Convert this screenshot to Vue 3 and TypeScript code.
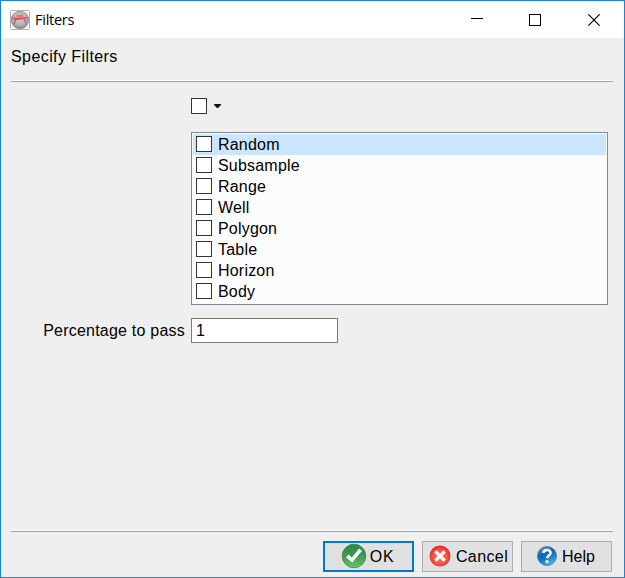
<script setup lang="ts">
import { ref } from 'vue'

interface FilterItem {
  name: string
  checked: boolean
}

const filters = ref<FilterItem[]>(
  ['Random', 'Subsample', 'Range', 'Well', 'Polygon', 'Table', 'Horizon', 'Body'].map((name) => ({
    name,
    checked: false,
  })),
)
const selected = ref(0)
const allChecked = ref(false)
const percentage = ref('1')

function toggleAll(): void {
  filters.value.forEach((f) => (f.checked = allChecked.value))
}
</script>

<template>
  <div class="window">
    <header class="titlebar">
      <svg class="app-icon" width="20" height="20" viewBox="0 0 20 20">
        <defs>
          <radialGradient id="disc" cx=".5" cy=".4" r=".6">
            <stop offset="0" stop-color="#d2d2d2" />
            <stop offset=".65" stop-color="#b5b5b5" />
            <stop offset="1" stop-color="#858585" />
          </radialGradient>
        </defs>
        <rect x=".5" y=".5" width="19" height="19" rx="1" fill="#f4f4f4" stroke="#b0b0b0" />
        <circle cx="10" cy="10" r="8.7" fill="url(#disc)" stroke="#888" stroke-width=".8" />
        <path d="M6 5.5 12.8 4.2 13.5 7 6.5 7.5z" fill="#e8494b" fill-opacity=".6" />
        <path d="M2.2 7.4 6 8.6 17.8 7.6M4 9.6 13.5 8.8M5.6 9.5 4.3 13.8M14.5 8.5 15.6 13.5" fill="none" stroke="#ea4648" stroke-width="1.1" />
      </svg>
      <span class="title">Filters</span>
      <div class="controls">
        <svg width="12" height="12" viewBox="0 0 12 12"><path d="M0 4.5h12" stroke="#000" /></svg>
        <svg width="12" height="12" viewBox="0 0 12 12"><rect x=".5" y=".5" width="11" height="11" fill="none" stroke="#000" /></svg>
        <svg width="12" height="12" viewBox="0 0 12 12"><path d="M.3.3l11.4 11.4M11.7.3.3 11.7" stroke="#000" stroke-width="1.1" /></svg>
      </div>
    </header>

    <main class="content">
      <h1 class="heading">Specify Filters</h1>
      <div class="rule"></div>
      <div class="select-all">
        <input v-model="allChecked" type="checkbox" class="box" @change="toggleAll" />
        <svg width="7" height="4" viewBox="0 0 7 4"><path d="M0 0h7v1L4 4H3L0 1z" fill="#111" /></svg>
      </div>
      <ul class="list">
        <li
          v-for="(f, i) in filters"
          :key="f.name"
          :class="['row', { active: i === selected }]"
          @click="selected = i"
        >
          <input v-model="f.checked" type="checkbox" class="box" />
          <span>{{ f.name }}</span>
        </li>
      </ul>
      <label class="field">
        <span class="field-label">Percentage to pass</span>
        <input v-model="percentage" class="text" type="text" />
      </label>
    </main>

    <footer class="footer">
      <div class="rule"></div>
      <div class="buttons">
        <button class="btn primary">
          <svg width="26" height="26" viewBox="0 0 26 26">
            <defs>
              <linearGradient id="green" x1="0" y1="0" x2="0" y2="1">
                <stop offset="0" stop-color="#2d8541" />
                <stop offset=".5" stop-color="#419c50" />
                <stop offset="1" stop-color="#65c56c" />
              </linearGradient>
            </defs>
            <circle cx="13" cy="13" r="11.8" fill="url(#green)" stroke="#2f8745" stroke-width=".8" />
            <path d="M5 14.3 7.6 11.5 10.8 14.8 18.2 5.6 20.9 8 11.2 19.6z" fill="#fff" />
          </svg>
          <span class="ok">OK</span>
        </button>
        <button class="btn cancel">
          <svg width="22" height="22" viewBox="0 0 22 22">
            <defs>
              <radialGradient id="red" cx=".5" cy=".55" r=".5">
                <stop offset="0" stop-color="#ff7d68" />
                <stop offset=".7" stop-color="#f65145" />
                <stop offset="1" stop-color="#df3030" />
              </radialGradient>
            </defs>
            <circle cx="11" cy="11" r="10.5" fill="url(#red)" />
            <path d="M6.3 6.3l9.4 9.4M15.7 6.3l-9.4 9.4" stroke="#fff" stroke-width="3.2" />
          </svg>
          <span>Cancel</span>
        </button>
        <button class="btn help">
          <svg width="20" height="20" viewBox="0 0 20 20">
            <defs>
              <linearGradient id="blue" x1="0" y1="0" x2=".5" y2="1">
                <stop offset="0" stop-color="#5ba0dc" />
                <stop offset=".45" stop-color="#1465b5" />
                <stop offset=".7" stop-color="#1878c8" />
                <stop offset="1" stop-color="#42baf0" />
              </linearGradient>
            </defs>
            <circle cx="10" cy="10" r="9.5" fill="url(#blue)" stroke="#3470ad" stroke-width=".8" />
            <path d="M6.4 7C6.5 2.9 13.7 3.1 13.6 6.9 13.5 9.5 10.2 9.6 10.1 12.3" fill="none" stroke="#fff" stroke-width="2.5" />
            <circle cx="10" cy="15.5" r="1.6" fill="#fff" />
          </svg>
          <span>Help</span>
        </button>
      </div>
    </footer>
  </div>
</template>

<style>
body {
  margin: 0;
  overflow: hidden;
}
</style>

<style scoped>
.window {
  box-sizing: border-box;
  width: 625px;
  height: 578px;
  display: flex;
  flex-direction: column;
  border: 1px solid #1883d7;
  background: #efefef;
  color: #000;
  font: 16px/20px "Liberation Sans", Arial, sans-serif;
}
svg {
  display: block;
  flex: none;
}
.titlebar {
  height: 37px;
  box-sizing: border-box;
  padding: 0 24px 0 9px;
  display: flex;
  align-items: center;
  background: #fff;
}
.title {
  margin-left: 5px;
  font: 14.5px/20px "Open Sans", "Noto Sans", sans-serif;
  letter-spacing: -0.25px;
}
.controls {
  margin-left: auto;
  display: flex;
  gap: 47px;
}
.controls svg:first-child {
  margin-right: -1px;
}
.content {
  flex: 1;
  padding: 9px 11px 0 10px;
}
.heading {
  margin: 0;
  height: 33px;
  font: inherit;
  letter-spacing: 0.42px;
}
.rule {
  height: 1px;
  border-top: 1px solid #fff;
  background: #a0a0a0;
}
.select-all {
  display: flex;
  align-items: center;
  gap: 7px;
  margin: 16px 0 18px 180px;
}
.box {
  appearance: none;
  flex: none;
  box-sizing: border-box;
  width: 16px;
  height: 16px;
  margin: 0;
  border: 1px solid #333;
  background: #fff;
}
.box:checked {
  background: #333;
  box-shadow: inset 0 0 0 3px #fff;
}
.list {
  box-sizing: border-box;
  width: 417px;
  height: 173px;
  margin: 0 0 0 180px;
  padding: 1px;
  list-style: none;
  border: 1px solid #828790;
  background: #fcfcfc;
  letter-spacing: 0.2px;
}
.row {
  display: flex;
  align-items: center;
  gap: 6px;
  height: 21px;
  padding-left: 3px;
}
.row .box {
  margin-bottom: 1px;
}
.row.active {
  background: #cbe5fc;
}
.field {
  display: flex;
  align-items: center;
  gap: 6px;
  margin-top: 13px;
}
.field-label {
  width: 174px;
  text-align: right;
  white-space: nowrap;
  letter-spacing: 0.22px;
}
.text {
  box-sizing: border-box;
  width: 147px;
  height: 25px;
  padding: 0 4px;
  border: 1px solid #7a7a7a;
  background: #fff;
  color: #000;
  font: inherit;
  outline: none;
}
.footer {
  padding: 0 11px 5px 10px;
}
.buttons {
  display: flex;
  justify-content: flex-end;
  gap: 8px;
  padding: 9px 1px 0 0;
}
.btn {
  box-sizing: border-box;
  width: 91px;
  height: 31px;
  padding: 0;
  display: flex;
  align-items: center;
  justify-content: center;
  gap: 5px;
  border: 1px solid #adadad;
  background: #e1e1e1;
  color: #000;
  font: inherit;
}
.btn svg {
  margin-bottom: 1px;
}
.primary {
  border: 2px solid #0078d7;
  gap: 3px;
  padding-right: 2px;
}
.cancel {
  padding-left: 2px;
  letter-spacing: 0.4px;
}
.help {
  gap: 5px;
  padding-right: 1px;
}
.ok {
  letter-spacing: 0.8px;
}
</style>
